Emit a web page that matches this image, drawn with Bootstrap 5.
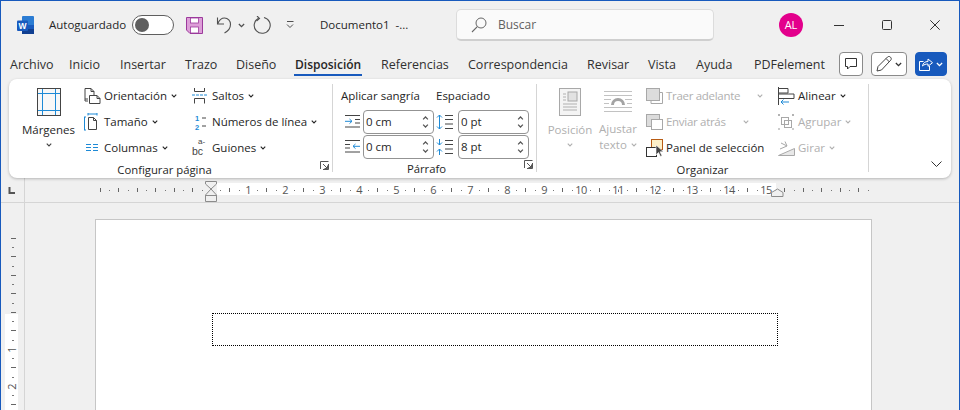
<!DOCTYPE html>
<html lang="es">
<head>
<meta charset="utf-8">
<title>Documento1 - Word</title>
<link href="https://cdn.jsdelivr.net/npm/bootstrap@5.3.0/dist/css/bootstrap.min.css" rel="stylesheet">
<style>
html,body{margin:0;height:410px;overflow:hidden;background:#f0f0f0}
body{font-family:"Open Sans","Noto Sans",sans-serif;font-size:11.5px;color:#262626;line-height:16px}
svg{display:block;flex:none}
.win{width:960px;height:410px;border:1px solid #185abd;border-bottom:0;background:#f0f0f0;overflow:hidden}
.titlebar{height:48px;display:grid;grid-template-columns:32px 83px 54px 30px 22px 15px 32px 35px 136px 323px 50px 48px 48px 48px;padding-left:16px;align-items:center}
.toggle{width:42px;height:20px;border:1px solid #5f5f5f;border-radius:10px;background:#fff;padding:0 2px}
.knob{width:14px;height:14px;border-radius:50%;background:#5f5f5f}
.searchbox{width:258px;height:32px;background:#fafafa;border:1px solid #dcdcdc;border-bottom:2px solid #cfcfcf;border-radius:5px;padding-left:14px;gap:11px;color:#616161;font-size:12px}
.avatar{width:24px;height:24px;border-radius:50%;background:#e3008c;color:#fff;font-size:11px}
.tabs{display:grid;grid-template-columns:59px 51px 65px 51px 59px 86px 87px 119px 61px 48px 58px 85px 1fr;padding:4px 0 0 9px;height:30px;flex-wrap:nowrap}
.tabs .nav-link{padding:0;color:#303030;font-size:12.5px;line-height:23px;height:23px;border-bottom:2px solid transparent;border-radius:0;justify-self:start;white-space:nowrap}
.tabs .nav-link.active{font-size:12px;font-weight:600;color:#262626;border-bottom-color:#185abd;margin-left:-1px;padding:0 1px}
.tabbtn{height:24px;margin-top:-1px;border:1px solid #8a8a8a;border-radius:4px;background:#fff;padding:0;gap:3px}
.tabbtn.primary{background:#185abd;border-color:#185abd}
.w24{width:24px}.w36{width:36px}.w32{width:32px}
.ribbon{height:99px;margin:0 8px;background:#fff;border-radius:8px;box-shadow:0 1px 3px rgba(0,0,0,.25);position:relative;z-index:2}
.grp{display:flex;flex-direction:column;padding-top:4px;border-right:0}
.sep{width:1px;height:88px;margin-top:5px;background:#d5d5d5;flex:none}
.g1{width:323px}.g2{width:203px}.g3{width:331px}
.gbody{height:78px;display:grid}
.g1 .gbody{grid-template-columns:75px 108px 1fr;grid-template-rows:repeat(3,26px)}
.g2 .gbody{grid-template-columns:22px 73px 22px 71px;grid-template-rows:26px 25px 25px;padding-left:8px}
.g3 .gbody{grid-template-columns:54px 42px 139px 1fr;grid-template-rows:repeat(3,26px);padding-left:6px}
.glabel{height:18px;line-height:17px;font-size:11.3px}
.glabel .txt{flex:1;text-align:center}
.lau1{width:12px}.lau2{width:16px;padding-left:4px}
.tall{grid-row:1 / span 3;display:flex;flex-direction:column;align-items:center;padding-top:5px;line-height:16px;white-space:nowrap}
.tall.wrapicon{padding-top:8px}
.tall .cap{margin-top:6px}
.tall.wrapicon .cap{margin-top:8px}
.tall .dn{margin:5px 0 0}
.rowbtn{display:flex;align-items:center;white-space:nowrap}
.ico{width:20px;flex:none}
.spin{width:71px;height:24px;border:1px solid #939393;border-radius:4px;padding:0 4px 0 2px;background:#fff;align-self:center}
.arrows{color:#555;display:block}
.arrows svg{width:7px;height:4px}
.arrows svg:first-child{transform:scaleY(-1);margin-bottom:4px}
.lbl2{grid-column:span 2;align-self:center}
.off{color:#b0b0b0}
.tight{letter-spacing:-.3px}
.chv{width:6px;height:4px;flex:none;margin-left:4px}
.pad7{padding-left:7px}
.gapc{margin-left:17px}
.collapse-cell{flex:1;display:flex;justify-content:end;align-items:end;padding:0 9px 11px 0}
.rulerbar{height:25px;position:relative;z-index:1}
.work{height:207px;overflow:hidden}
.vruler{width:24px;border-right:1px solid #d5d5d5;flex:none;overflow:hidden}
.sheet{width:777px;margin:16px 0 0 70px;height:260px;background:#fff;border:1px solid #c6c6c6;border-bottom:0;flex:none}
.frame{width:566px;height:33px;margin:94px 0 0 116px;border:1px dotted #000}
.rn{font-family:"Open Sans",sans-serif;font-size:11px;fill:#555;text-anchor:middle;letter-spacing:-.6px}
</style>
</head>
<body>
<svg width="0" height="0" style="position:absolute">
  <defs>
    <symbol id="c" viewBox="0 0 8 5"><path d="M1 .8l3 3 3-3" fill="none" stroke="currentColor" stroke-width="1.500"/></symbol>
    <pattern id="ht" patternUnits="userSpaceOnUse" x="100" y="0" width="37" height="30"><rect x="0" y="10" width="1" height="4" fill="#666"/><rect x="9" y="12" width="1" height="1" fill="#777"/><rect x="18" y="10" width="1" height="4" fill="#666"/><rect x="28" y="12" width="1" height="1" fill="#777"/></pattern>
    <pattern id="vt" patternUnits="userSpaceOnUse" x="0" y="238" width="30" height="37"><rect x="11" y="0" width="5" height="1" fill="#666"/><rect x="12" y="9" width="2" height="1" fill="#777"/><rect x="11" y="18" width="5" height="1" fill="#666"/><rect x="12" y="28" width="2" height="1" fill="#777"/></pattern>
  </defs>
</svg>
<div class="win d-flex flex-column">
  <div class="titlebar">
    <svg width="17" height="18" viewBox="0 0 17 18"><rect x="5" y="0" width="12" height="18" rx="1" fill="#2b7cd3"/><rect x="5" y="9" width="12" height="4" fill="#185abd"/><rect x="5" y="13" width="12" height="5" fill="#103f91"/><rect x="0" y="4.500" width="11" height="10.500" rx="1" fill="#185abd"/><text x="5.500" y="12.600" text-anchor="middle" font-size="8.500" font-weight="700" fill="#fff" font-family="Liberation Sans">W</text></svg>
    <span>Autoguardado</span>
    <div class="toggle d-flex align-items-center"><div class="knob"></div></div>
    <svg width="17" height="17" viewBox="0 0 17 17"><path d="M.5.5h16v16H4L.5 13z" fill="#dd9ed8" stroke="#9c3a9c"/><rect x="4.500" y="1" width="8" height="5" fill="#fff" stroke="#9c3a9c" stroke-width=".8"/><rect x="4.500" y="10" width="8" height="6" fill="#fff" stroke="#9c3a9c" stroke-width=".8"/></svg>
    <svg width="16" height="18" viewBox="0 0 16 18"><path d="M1.500 1.500v6.500H8M1.800 7.500C3.500 3.500 6 2 8.500 2c3.500 0 6 2.800 6 6.300 0 3.700-2.700 7-6 8.700" fill="none" stroke="#505050" stroke-width="1.100"/></svg>
    <svg width="7" height="5" style="color:#505050"><use href="#c"/></svg>
    <svg width="18" height="18" viewBox="0 0 18 18"><path d="M5.500 2.200A8 8 0 1 0 11 1.500" fill="none" stroke="#505050" stroke-width="1.100"/><path d="M4 0l2.500 2.500L3.500 5" fill="none" stroke="#505050" stroke-width="1.100"/></svg>
    <svg width="10" height="8" viewBox="0 0 10 8"><path d="M2 .5h6.500M2 3.500l3 3 3-3" fill="none" stroke="#505050" stroke-width="1"/></svg>
    <span>Documento1&nbsp; -...</span>
    <div class="searchbox d-flex align-items-center">
      <svg width="16" height="16" viewBox="0 0 16 16"><circle cx="10" cy="6" r="5" fill="none" stroke="#666" stroke-width="1"/><path d="M6.300 9.700L1 15" stroke="#666" stroke-width="1.100"/></svg>
      <span>Buscar</span>
    </div>
    <div class="avatar d-flex align-items-center justify-content-center">AL</div>
    <svg width="10" height="10" viewBox="0 0 10 10" style="margin-left:5px"><path d="M0 5.500h10" stroke="#333"/></svg>
    <svg width="10" height="10" viewBox="0 0 10 10" style="margin-left:5px"><rect x=".5" y=".5" width="9" height="9" rx="1" fill="none" stroke="#333"/></svg>
    <svg width="10" height="10" viewBox="0 0 10 10" style="margin-left:5px"><path d="M.3.300l9.400 9.400M9.700.300L.3 9.700" stroke="#333"/></svg>
  </div>

  <nav class="nav tabs">
    <a class="nav-link" href="#">Archivo</a>
    <a class="nav-link" href="#">Inicio</a>
    <a class="nav-link" href="#">Insertar</a>
    <a class="nav-link" href="#">Trazo</a>
    <a class="nav-link" href="#">Diseño</a>
    <a class="nav-link active" href="#">Disposición</a>
    <a class="nav-link" href="#">Referencias</a>
    <a class="nav-link" href="#">Correspondencia</a>
    <a class="nav-link" href="#">Revisar</a>
    <a class="nav-link" href="#">Vista</a>
    <a class="nav-link" href="#">Ayuda</a>
    <a class="nav-link" href="#">PDFelement</a>
    <div class="d-flex gap-2">
      <button class="btn tabbtn w24 d-flex align-items-center justify-content-center" aria-label="Comentarios"><svg width="12" height="12" viewBox="0 0 12 12"><path d="M.5.500h11v8H5L2.500 11V8.500h-2z" fill="none" stroke="#333"/></svg></button>
      <button class="btn tabbtn w36 d-flex align-items-center justify-content-center" aria-label="Edición"><svg width="16" height="16" viewBox="0 0 16 16"><path d="M1 15l1-4.500L11.500 1c1-.800 2-.800 3 .2s1 2 .2 3L5.500 14z" fill="none" stroke="#444"/><path d="M10 2.500l3.500 3.500" stroke="#444"/></svg><svg width="7" height="5" style="color:#333"><use href="#c"/></svg></button>
      <button class="btn tabbtn primary w32 d-flex align-items-center justify-content-center" aria-label="Compartir"><svg width="14" height="14" viewBox="0 0 14 14"><path d="M.5 4.500h4M.5 4.500v9h10V9" fill="none" stroke="#fff"/><path d="M3.500 9c.5-3 2.500-4.500 5.500-4.500V2l4.500 3.700L9 9.300V7C7 7 5 7.500 3.500 9z" fill="none" stroke="#fff"/></svg><svg width="7" height="5" style="color:#fff"><use href="#c"/></svg></button>
    </div>
  </nav>

  <div class="ribbon d-flex">
    <section class="grp g1">
      <div class="gbody">
        <div class="tall ps-1">
          <svg width="24" height="28" viewBox="0 0 24 28"><rect x=".5" y=".5" width="23" height="27" fill="#f8f8f8" stroke="#444"/><path d="M5.500 1v26M18.500 1v26M1 5.500h22M1 22.500h22" stroke="#1e8ad6" fill="none"/></svg>
          <span class="cap">Márgenes</span>
          <svg class="chv dn" style="color:#444"><use href="#c"/></svg>
        </div>
        <div class="rowbtn"><span class="ico"><svg width="17" height="16" viewBox="0 0 17 16"><path d="M1 11V.5h6l3 3V7M7 .5v3h3" fill="none" stroke="#444"/><path d="M1 11h3M1 11v2h3" fill="none" stroke="#444"/><path d="M5.500 7.500H13l3 3v5H5.500zM13 7.500v3h3" fill="none" stroke="#444"/></svg></span>Orientación<svg class="chv"><use href="#c"/></svg></div>
        <div class="rowbtn"><span class="ico"><svg width="14" height="18" viewBox="0 0 14 18"><path d="M4 1h9M4 0v2.500M13 0v2.500M.5 4v13M0 4h2M0 17h2" fill="none" stroke="#1e8ad6"/><path d="M4.500 4.500h5l3 3v9h-8zM9.500 4.500v3h3" fill="none" stroke="#444"/></svg></span>Tamaño<svg class="chv"><use href="#c"/></svg></div>
        <div class="rowbtn"><span class="ico"><svg width="15" height="8" viewBox="0 0 15 8"><path d="M2 .5h5M2 3.500h5M2 6.500h5M9 .5h5M9 3.500h5M9 6.500h5" stroke="#1e8ad6" fill="none"/></svg></span>Columnas<svg class="chv"><use href="#c"/></svg></div>
        <div class="rowbtn" style="grid-column:3;grid-row:1"><span class="ico"><svg width="15" height="16" viewBox="0 0 15 16"><path d="M2.500 0v3.500h10V0M2.500 15.500V10.500h10v5" fill="none" stroke="#444"/><path d="M0 7h15" stroke="#1e8ad6" stroke-dasharray="3 1"/></svg></span>Saltos<svg class="chv"><use href="#c"/></svg></div>
        <div class="rowbtn" style="grid-column:3;grid-row:2"><span class="ico"><svg width="15" height="18" viewBox="0 0 15 18" font-family="Liberation Sans"><text font-size="7.500" font-weight="700" fill="#1e8ad6"><tspan x="3" y="8">1</tspan><tspan x="3" y="16.500">2</tspan></text><path d="M10 5h4M10 13h4" stroke="#444"/></svg></span>Números de línea<svg class="chv"><use href="#c"/></svg></div>
        <div class="rowbtn" style="grid-column:3;grid-row:3"><span class="ico"><svg width="16" height="24" viewBox="0 0 16 24"><text fill="#444" font-family="Liberation Sans"><tspan x="6" y="7.600" font-size="8">a-</tspan><tspan x="0" y="19" font-size="10.500">bc</tspan></text></svg></span>Guiones<svg class="chv"><use href="#c"/></svg></div>
      </div>
      <div class="glabel d-flex"><span class="txt">Configurar página</span><span class="lau1"><svg width="9" height="9" viewBox="0 0 9 9"><path d="M.5 8V.5h8M8.500 3v5.500H3M3 3l4.500 4.500M7.500 4.500v3h-3" fill="none" stroke="#555"/></svg></span></div>
    </section>
    <div class="sep"></div>
    <section class="grp g2">
      <div class="gbody">
        <div class="lbl2">Aplicar sangría</div>
        <div class="lbl2">Espaciado</div>
        <div class="d-flex align-items-center ps-1"><svg width="15" height="13" viewBox="0 0 15 13"><path d="M0 .5h15M10 4.500h5M10 8h5M0 12h15" stroke="#444" fill="none"/><path d="M0 6.300h7M4.500 4l2.500 2.300-2.500 2.300" stroke="#1e8ad6" fill="none"/></svg></div>
        <div class="spin d-flex align-items-center justify-content-between"><span>0 cm</span><span class="arrows"><svg><use href="#c"/></svg><svg><use href="#c"/></svg></span></div>
        <div class="d-flex align-items-center"><svg width="18" height="16" viewBox="0 0 18 16"><path d="M3.500 1v14M1 3.500L3.500 1 6 3.500M1 12.500L3.500 15 6 12.500" stroke="#1e8ad6" fill="none"/><path d="M9 1.500h8M9 5.500h8M9 10h8M9 14.500h8" stroke="#444" fill="none"/></svg></div>
        <div class="spin d-flex align-items-center justify-content-between"><span>0 pt</span><span class="arrows"><svg><use href="#c"/></svg><svg><use href="#c"/></svg></span></div>
        <div class="d-flex align-items-center ps-1"><svg width="15" height="13" viewBox="0 0 15 13"><path d="M0 .5h15M0 4.500h5M0 8h5M0 12h15" stroke="#444" fill="none"/><path d="M15 6.300H8M10.500 4L8 6.300l2.500 2.300" stroke="#1e8ad6" fill="none"/></svg></div>
        <div class="spin d-flex align-items-center justify-content-between"><span>0 cm</span><span class="arrows"><svg><use href="#c"/></svg><svg><use href="#c"/></svg></span></div>
        <div class="d-flex align-items-center"><svg width="18" height="16" viewBox="0 0 18 16"><path d="M3.500 0v6M1 3.500L3.500 6 6 3.500M3.500 10v6M1 12.500L3.500 10 6 12.500" stroke="#1e8ad6" fill="none"/><path d="M9 1.500h8M9 5.500h8M9 10h8M9 14.500h8" stroke="#444" fill="none"/></svg></div>
        <div class="spin d-flex align-items-center justify-content-between"><span>8 pt</span><span class="arrows"><svg><use href="#c"/></svg><svg><use href="#c"/></svg></span></div>
      </div>
      <div class="glabel d-flex"><span class="txt">Párrafo</span><span class="lau2"><svg width="9" height="9" viewBox="0 0 9 9"><path d="M.5 8V.5h8M8.500 3v5.500H3M3 3l4.500 4.500M7.500 4.500v3h-3" fill="none" stroke="#555"/></svg></span></div>
    </section>
    <div class="sep"></div>
    <section class="grp g3">
      <div class="gbody">
        <div class="tall off">
          <svg width="22" height="28" viewBox="0 0 22 28"><rect x=".5" y=".5" width="21" height="27" fill="#f4f4f4" stroke="#a8a8a8"/><path d="M4 6h3M4 9h3M4 12h3M4 16h14M4 19h14M4 22h14" stroke="#b0b0b0"/><rect x="9" y="4" width="9" height="9" fill="#e2e2e2" stroke="#a8a8a8"/></svg>
          <span class="cap">Posición</span>
          <svg class="chv dn"><use href="#c"/></svg>
        </div>
        <div class="tall wrapicon off">
          <svg width="28" height="22" viewBox="0 0 28 22"><path d="M0 .5h28M0 4.500h28M0 8.500h7M21 8.500h7M0 12.500h5M23 12.500h5M0 16.500h28M0 20.500h28" stroke="#c2c2c2"/><path d="M7 14a7 7 0 0 1 14 0h-3a4 4 0 0 0-8 0z" fill="#a4a4a4"/></svg>
          <span class="cap">Ajustar</span>
          <span class="d-flex align-items-center">texto<svg class="chv"><use href="#c"/></svg></span>
        </div>
        <div class="rowbtn off pad7" style="grid-column:3;grid-row:1"><span class="ico"><svg width="17" height="16" viewBox="0 0 17 16"><path d="M14 4.500h2.500V15.500H5V13" fill="none" stroke="#a8a8a8"/><rect x=".5" y=".5" width="13" height="12" fill="#dcdcdc" stroke="#a8a8a8"/></svg></span><span class="tight">Traer adelante</span><svg class="chv gapc"><use href="#c"/></svg></div>
        <div class="rowbtn off pad7" style="grid-column:3;grid-row:2"><span class="ico"><svg width="17" height="16" viewBox="0 0 17 16"><rect x=".5" y=".5" width="13" height="12" fill="#dcdcdc" stroke="#a8a8a8"/><rect x="5.500" y="5.500" width="11" height="10" fill="#fff" stroke="#a8a8a8"/></svg></span><span class="tight">Enviar atrás</span><svg class="chv gapc"><use href="#c"/></svg></div>
        <div class="rowbtn pad7" style="grid-column:3;grid-row:3"><span class="ico"><svg width="17" height="18" viewBox="0 0 17 18"><rect x="5.500" y=".5" width="11" height="10" fill="#fdf0c8" stroke="#b85c14"/><rect x=".5" y="8.500" width="10" height="9" fill="#fff" stroke="#333"/><path d="M10 6v10l2.500-2.500 2 4 1.500-.7-2-4h3.500z" fill="#444" stroke="#fff" stroke-width=".6"/></svg></span>Panel de selección</div>
        <div class="rowbtn" style="grid-column:4;grid-row:1"><span class="ico"><svg width="17" height="18" viewBox="0 0 17 18"><path d="M.5 0v18" stroke="#444"/><path d="M1 1.500h9v4.500H1M1 7h15v4.500H1" fill="none" stroke="#444"/><path d="M3 15h8M5.500 12.500L3 15l2.500 2.500" fill="none" stroke="#1e8ad6"/></svg></span>Alinear<svg class="chv"><use href="#c"/></svg></div>
        <div class="rowbtn off" style="grid-column:4;grid-row:2"><span class="ico"><svg width="16" height="17" viewBox="0 0 16 17"><rect x="3.500" y="3.500" width="7" height="7" fill="none" stroke="#a8a8a8"/><rect x="6.500" y="6.500" width="7" height="7" fill="none" stroke="#a8a8a8"/><path d="M0 1h2M14 1h2M0 15h2M14 15h2M1 0v2M15 0v2" stroke="#999"/></svg></span>Agrupar<svg class="chv"><use href="#c"/></svg></div>
        <div class="rowbtn off" style="grid-column:4;grid-row:3"><span class="ico"><svg width="17" height="15" viewBox="0 0 17 15"><path d="M.5 14.500l16-7v7z" fill="#e8e8e8" stroke="#a8a8a8"/><path d="M2 8l7-3-6-3M7 .5L9 5" fill="none" stroke="#a8a8a8"/></svg></span>Girar<svg class="chv"><use href="#c"/></svg></div>
      </div>
      <div class="glabel d-flex"><span class="txt">Organizar</span></div>
    </section>
    <div class="sep"></div>
    <div class="collapse-cell"><svg width="11" height="6" viewBox="0 0 11 6"><path d="M.5.500l5 5 5-5" fill="none" stroke="#333"/></svg></div>
  </div>

  <div class="rulerbar">
    <svg width="958" height="25" viewBox="1 178 958 25">
      <rect x="217" y="183" width="559" height="12" fill="#fff"/>
      <g transform="translate(0,178)"><rect x="100" y="0" width="769" height="25" fill="url(#ht)"/></g>
      <path d="M1 202.500h958" stroke="#d5d5d5"/>
      <path d="M24.500 178v25" stroke="#d5d5d5"/>
      <path d="M9.500 187v6H15" fill="none" stroke="#555" stroke-width="2"/>
      <g paint-order="stroke" stroke="#fff" stroke-width="3">
      <text class="rn" x="248" y="194">1</text><text class="rn" x="285" y="194">2</text><text class="rn" x="322" y="194">3</text><text class="rn" x="359" y="194">4</text><text class="rn" x="396" y="194">5</text><text class="rn" x="433" y="194">6</text><text class="rn" x="470" y="194">7</text><text class="rn" x="507" y="194">8</text><text class="rn" x="544" y="194">9</text><text class="rn" x="581" y="194">10</text><text class="rn" x="618" y="194">11</text><text class="rn" x="655" y="194">12</text><text class="rn" x="692" y="194">13</text><text class="rn" x="729" y="194">14</text><text class="rn" x="766" y="194">15</text>
      </g>
      <path d="M205.500 181.500h11v2.500L211 189l-5.500-5z" fill="#f0f0f0" stroke="#8c8c8c"/>
      <path d="M211 189l5.500 6v6.500h-11V195z" fill="#f0f0f0" stroke="#8c8c8c"/>
      <path d="M205.500 195.500h11" stroke="#8c8c8c"/>
      <path d="M771.500 196.500v-4l6-3.500 5.500 3.500v4z" fill="#f0f0f0" stroke="#8c8c8c"/>
    </svg>
  </div>

  <div class="work d-flex">
    <div class="vruler">
      <svg width="23" height="207" viewBox="1 203 23 207">
        <rect x="5" y="314" width="13" height="96" fill="#fff"/>
        <rect x="1" y="238" width="23" height="172" fill="url(#vt)"/>
        <rect x="7" y="344" width="10" height="11" fill="#fff"/>
        <rect x="7" y="381" width="10" height="11" fill="#fff"/>
        <text class="rn" transform="translate(16,350) rotate(-90)">1</text>
        <text class="rn" transform="translate(16,387) rotate(-90)">2</text>
      </svg>
    </div>
    <div class="sheet"><div class="frame" style="margin-top:93px"></div></div>
  </div>
</div>
<script src="https://cdn.jsdelivr.net/npm/bootstrap@5.3.0/dist/js/bootstrap.bundle.min.js"></script>
</body>
</html>
